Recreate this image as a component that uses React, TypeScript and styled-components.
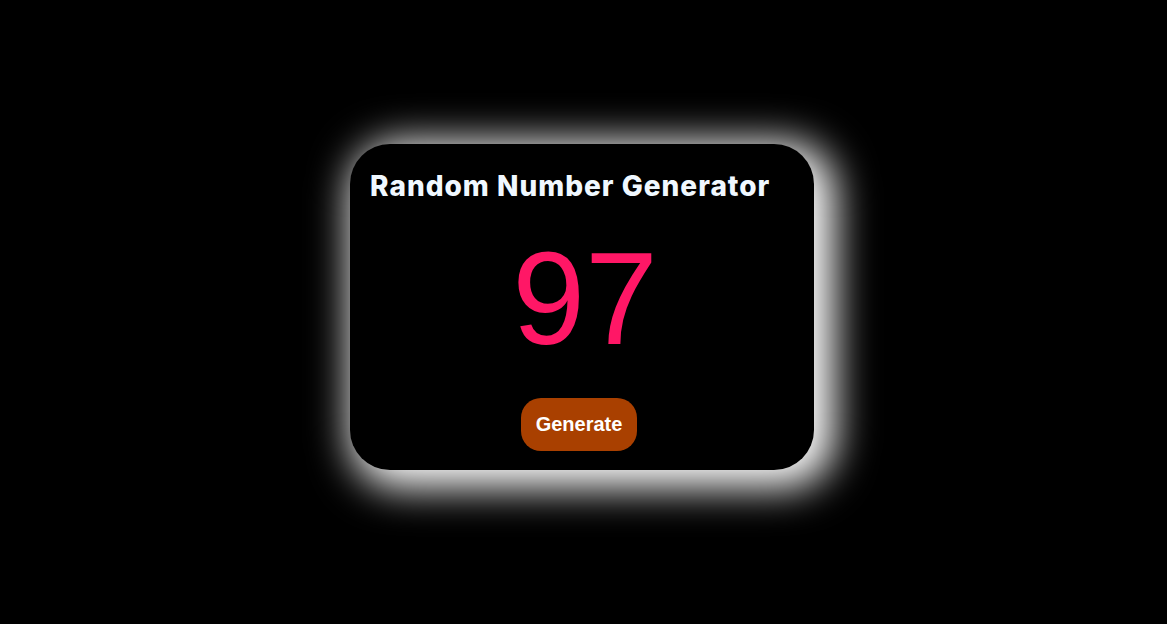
import styled, { createGlobalStyle } from "styled-components";

const GlobalStyle = createGlobalStyle`
  html, body {
    margin: 0;
    padding: 0;
    background: #000;
  }
`;

const Page = styled.main`
  min-height: 100vh;
  display: flex;
  align-items: center;
  justify-content: center;
  padding: 0 3px 10px 0;
  box-sizing: border-box;
`;

const Card = styled.section`
  width: 464px;
  height: 326px;
  box-sizing: border-box;
  padding: 22px 20px 19px;
  background: #000;
  border-radius: 40px;
  box-shadow: 11px 8px 40px 10px #fff;
  display: flex;
  flex-direction: column;
`;

const Title = styled.h1`
  margin: 0;
  font-family: "Inter", "Open Sans", sans-serif;
  font-weight: 800;
  font-size: 28px;
  letter-spacing: 1px;
  line-height: 40px;
  color: aliceblue;
`;

const Number = styled.div`
  margin-top: 28px;
  padding-left: 6px;
  flex: 1;
  text-align: center;
  font-family: "Liberation Sans", Arial, sans-serif;
  font-size: 131px;
  line-height: 130px;
  color: #ff1766;
`;

const Button = styled.button`
  align-self: center;
  margin-right: 6px;
  padding: 15px 15px;
  border: none;
  border-radius: 20px;
  background: #a94000;
  color: #fff;
  font-family: "Liberation Sans", Arial, sans-serif;
  font-weight: 700;
  font-size: 20px;
  line-height: 23px;
  cursor: pointer;
`;

export default function App() {
  return (
    <>
      <GlobalStyle />
      <Page>
        <Card>
          <Title>Random Number Generator</Title>
          <Number>97</Number>
          <Button>Generate</Button>
        </Card>
      </Page>
    </>
  );
}
